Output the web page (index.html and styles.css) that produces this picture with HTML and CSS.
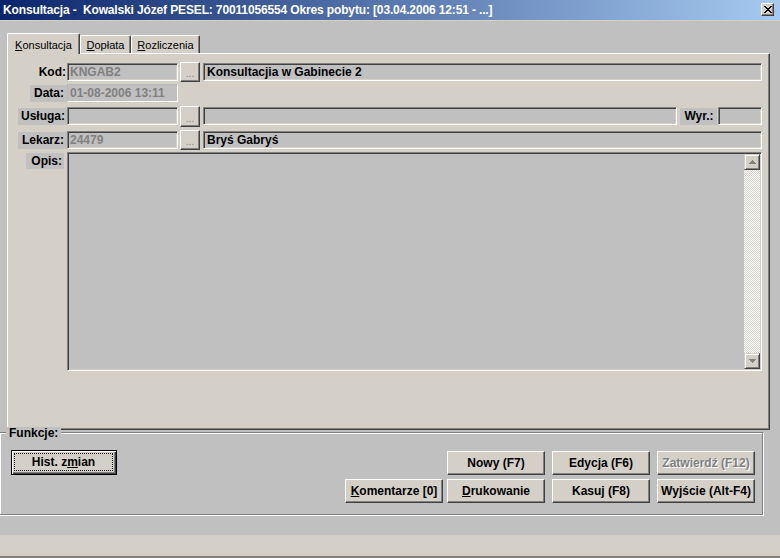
FILE: index.html
```html
<!DOCTYPE html>
<html lang="pl">
<head>
<meta charset="utf-8">
<title>Konsultacja</title>
<link rel="stylesheet" href="styles.css">
</head>
<body>
<div class="window">
  <div class="titlebar">
    <span class="title">Konsultacja -  Kowalski Józef PESEL: 70011056554 Okres pobytu: [03.04.2006 12:51 - ...]</span>
    <span class="close"><svg width="8" height="7" viewBox="0 0 8 7"><path d="M0 0h2v1h1v1h2V1h1V0h2v1H7v1H6v1H5v1h1v1h1v1h1v1H6V6H5V5H3v1H2v1H0V6h1V5h1V4h1V3H2V2H1V1H0z" fill="#000"/></svg></span>
  </div>

  <div class="tabstrip">
    <div class="tab tab-active"><u>K</u>onsultacja</div>
    <div class="tab tab-dop"><u>D</u>opłata</div>
    <div class="tab tab-roz"><u>R</u>ozliczenia</div>
  </div>

  <div class="panel">
    <div class="row row-kod">
      <div class="lbl"><span class="lbl-text plain">Kod:</span></div>
      <div class="field field-code dim">KNGAB2</div>
      <div class="dots-btn">...</div>
      <div class="field field-desc">Konsultacjia w Gabinecie 2</div>
    </div>
    <div class="row row-data">
      <div class="lbl"><span class="lbl-text">Data:</span></div>
      <div class="field field-code flat dim">01-08-2006 13:11</div>
    </div>
    <div class="row row-usl">
      <div class="lbl"><span class="lbl-text lbl-usl">Usługa:</span></div>
      <div class="field field-code"></div>
      <div class="dots-btn">...</div>
      <div class="field field-desc"></div>
      <span class="lbl-text lbl-wyr">Wyr.:</span>
      <div class="field field-wyr"></div>
    </div>
    <div class="row row-lek">
      <div class="lbl"><span class="lbl-text">Lekarz:</span></div>
      <div class="field field-code dim">24479</div>
      <div class="dots-btn">...</div>
      <div class="field field-desc">Bryś Gabryś</div>
    </div>
    <div class="row row-opis">
      <div class="lbl lbl-top"><span class="lbl-text lbl-opis">Opis:</span></div>
      <div class="memo">
        <div class="memo-area"></div>
        <div class="vscroll">
          <div class="sb-btn"><svg width="7" height="4" viewBox="0 0 7 4"><path d="M3 0h1v1h1v1h1v1h1v1H0V3h1V2h1V1h1z" fill="#808080"/></svg></div>
          <div class="sb-track"></div>
          <div class="sb-btn"><svg width="7" height="4" viewBox="0 0 7 4"><path d="M0 0h7v1H6v1H5v1H4v1H3V3H2V2H1V1H0z" fill="#808080"/></svg></div>
        </div>
      </div>
    </div>
  </div>

  <div class="groupbox">
    <span class="legend">Funkcje:</span>
    <div class="gb-left">
      <div class="btn btn-default"><span class="focus">Hist. z<u>m</u>ian</span></div>
    </div>
    <div class="gb-right">
      <div class="btn-row">
        <div class="btn">Nowy (F7)</div>
        <div class="btn">Edycja (F6)</div>
        <div class="btn disabled">Zatwierdź (F12)</div>
      </div>
      <div class="btn-row">
        <div class="btn btn-kom"><u>K</u>omentarze [0]</div>
        <div class="btn"><u>D</u>rukowanie</div>
        <div class="btn">Kasuj (F8)</div>
        <div class="btn">Wyjście (Alt-F4)</div>
      </div>
    </div>
  </div>

  <div class="status"></div>
</div>
</body>
</html>
```

FILE: styles.css
```css
* { box-sizing: border-box; }

html, body {
  margin: 0;
  padding: 0;
}

body {
  width: 780px;
  height: 558px;
  overflow: hidden;
  background: #c0c0c0;
  font-family: "Liberation Sans", Arial, sans-serif;
  font-size: 12px;
  color: #000;
}

.window {
  width: 780px;
  height: 558px;
  display: flex;
  flex-direction: column;
}

/* ---------- title bar ---------- */
.titlebar {
  flex: none;
  height: 21px;
  display: flex;
  align-items: center;
  justify-content: space-between;
  padding: 0 6px 1px 3px;
  background: linear-gradient(to right, #0a246a, #a6caf0);
  border-bottom: 1px solid #d4d0c8;
  color: #fff;
  font-weight: bold;
  font-size: 12px;
}

.title {
  white-space: pre;
  letter-spacing: -0.14px;
}

.close {
  width: 13px;
  height: 13px;
  display: flex;
  align-items: center;
  justify-content: center;
  background: #d4d0c8;
  border: 1px solid;
  border-color: #fff #404040 #404040 #fff;
  box-shadow: inset -1px -1px #808080;
}

/* ---------- tabs ---------- */
.tabstrip {
  flex: none;
  height: 32px;
  display: flex;
  align-items: flex-end;
  padding-left: 7px;
}

.tab {
  height: 18px;
  background: #d4d0c8;
  border-top: 1px solid #fff;
  border-left: 1px solid #fff;
  border-right: 1px solid #404040;
  box-shadow: inset -1px 0 #808080;
  border-radius: 2px 2px 0 0;
  font-size: 11px;
  line-height: 14px;
  padding-top: 2px;
  text-align: center;
  white-space: nowrap;
}

.tab-active {
  width: 73px;
  height: 21px;
  margin-bottom: -1px;
  padding-top: 4px;
  position: relative;
  z-index: 1;
}

.tab-dop { width: 51px; }
.tab-roz { width: 69px; }

/* ---------- panel ---------- */
.panel {
  flex: none;
  width: 763px;
  height: 377px;
  margin-left: 7px;
  background: #d4d0c8;
  border-top: 1px solid #fff;
  border-left: 1px solid #fff;
  border-right: 1px solid #404040;
  border-bottom: 1px solid #404040;
  box-shadow: inset -1px -1px #808080;
  padding: 8px 7px 0 0;
  display: flex;
  flex-direction: column;
}

.row {
  display: flex;
  align-items: center;
  height: 20px;
  font-weight: bold;
}

.row-data { margin-top: 1px; }
.row-usl { margin-top: 3px; }
.row-lek { margin-top: 4px; }
.row-opis {
  margin-top: 2px;
  height: auto;
  align-items: flex-start;
}

.lbl {
  flex: none;
  width: 59px;
  display: flex;
  justify-content: flex-end;
}

.lbl-text {
  height: 17px;
  line-height: 17px;
  padding: 0 3px 0 4px;
  background: #c0c0c0;
  white-space: nowrap;
}

.lbl-text.plain {
  background: transparent;
  padding: 0 1px 0 0;
}

.lbl-usl { padding-left: 3px; padding-right: 2px; }

.lbl-opis {
  margin-top: 1px;
  margin-right: 3px;
  height: 16px;
  line-height: 16px;
  padding: 0 2px 0 5px;
}

.lbl-wyr {
  flex: none;
  width: 37px;
  margin-left: 3px;
  text-align: center;
}

.field {
  height: 18px;
  background: #c0c0c0;
  border: 1px solid;
  border-color: #808080 #fff #fff #808080;
  box-shadow: inset 1px 1px #404040, inset -1px -1px #d4d0c8;
  padding-left: 2px;
  line-height: 16px;
  white-space: nowrap;
  overflow: hidden;
}

.field-code {
  flex: none;
  width: 111px;
}

.field.flat {
  border-color: #b8b8b8 #fff #fff #b8b8b8;
  box-shadow: none;
}

.dim { color: #808080; }

.field-desc {
  flex: 1;
  padding-left: 3px;
}

.field-wyr {
  flex: none;
  width: 44px;
  margin-left: 1px;
}

.dots-btn {
  flex: none;
  width: 20px;
  height: 20px;
  margin: 0 3px 0 2px;
  background: #d4d0c8;
  border: 1px solid;
  border-color: #fff #404040 #404040 #fff;
  box-shadow: inset -1px -1px #808080;
  color: #808080;
  font-weight: normal;
  font-size: 10px;
  line-height: 10px;
  display: flex;
  align-items: flex-end;
  justify-content: center;
  padding-bottom: 2px;
  letter-spacing: 0;
}

.row-usl .dots-btn { height: 21px; }

/* ---------- memo ---------- */
.memo {
  flex: 1;
  height: 219px;
  display: flex;
  background: #c0c0c0;
  border: 1px solid;
  border-color: #808080 #fff #fff #808080;
  box-shadow: inset 1px 1px #404040, inset -1px -1px #d4d0c8;
  padding: 1px;
}

.memo-area { flex: 1; }

.vscroll {
  flex: none;
  width: 16px;
  display: flex;
  flex-direction: column;
}

.sb-btn {
  flex: none;
  height: 16px;
  background: #d4d0c8;
  border: 1px solid;
  border-color: #d4d0c8 #404040 #404040 #d4d0c8;
  box-shadow: inset 1px 1px #fff, inset -1px -1px #808080;
  display: flex;
  align-items: center;
  justify-content: center;
}

.sb-track {
  flex: 1;
  background: repeating-conic-gradient(#fff 0% 25%, #d4d0c8 0% 50%) 0 0 / 2px 2px;
}

/* ---------- group box ---------- */
.groupbox {
  flex: none;
  position: relative;
  width: 764px;
  height: 83px;
  margin: 2px 0 0 -1px;
  border: 1px solid #808080;
  box-shadow: inset 1px 1px #fff, 1px 1px #fff;
  padding: 17px 7px 0 11px;
  display: flex;
  justify-content: space-between;
  align-items: flex-start;
}

.legend {
  position: absolute;
  top: -6px;
  left: 6px;
  height: 13px;
  line-height: 13px;
  padding: 0 3px;
  background: #c0c0c0;
  font-weight: bold;
}

.btn {
  width: 98px;
  height: 24px;
  background: #d4d0c8;
  border: 1px solid;
  border-color: #fff #404040 #404040 #fff;
  box-shadow: inset -1px -1px #808080;
  font-weight: bold;
  display: flex;
  align-items: center;
  justify-content: center;
  white-space: nowrap;
}

.btn.disabled {
  color: #808080;
  text-shadow: 1px 1px #fff;
}

.btn-default {
  width: 106px;
  height: 25px;
  border: 1px solid #000;
  box-shadow: inset 1px 1px #fff, inset -1px -1px #404040, inset -2px -2px #808080;
  padding: 2px 3px 3px 2px;
}

.focus {
  width: 100%;
  height: 100%;
  border: 1px dotted #000;
  display: flex;
  align-items: center;
  justify-content: center;
}

.gb-right {
  margin-top: 1px;
  display: flex;
  flex-direction: column;
  align-items: flex-end;
  gap: 4px;
}

.btn-row {
  display: flex;
  gap: 7px;
}

.btn-kom { margin-right: -3px; }

/* ---------- status ---------- */
.status {
  flex: none;
  height: 23px;
  margin-top: 20px;
  background: #d4d0c8;
  border-bottom: 2px solid #808080;
}
```
